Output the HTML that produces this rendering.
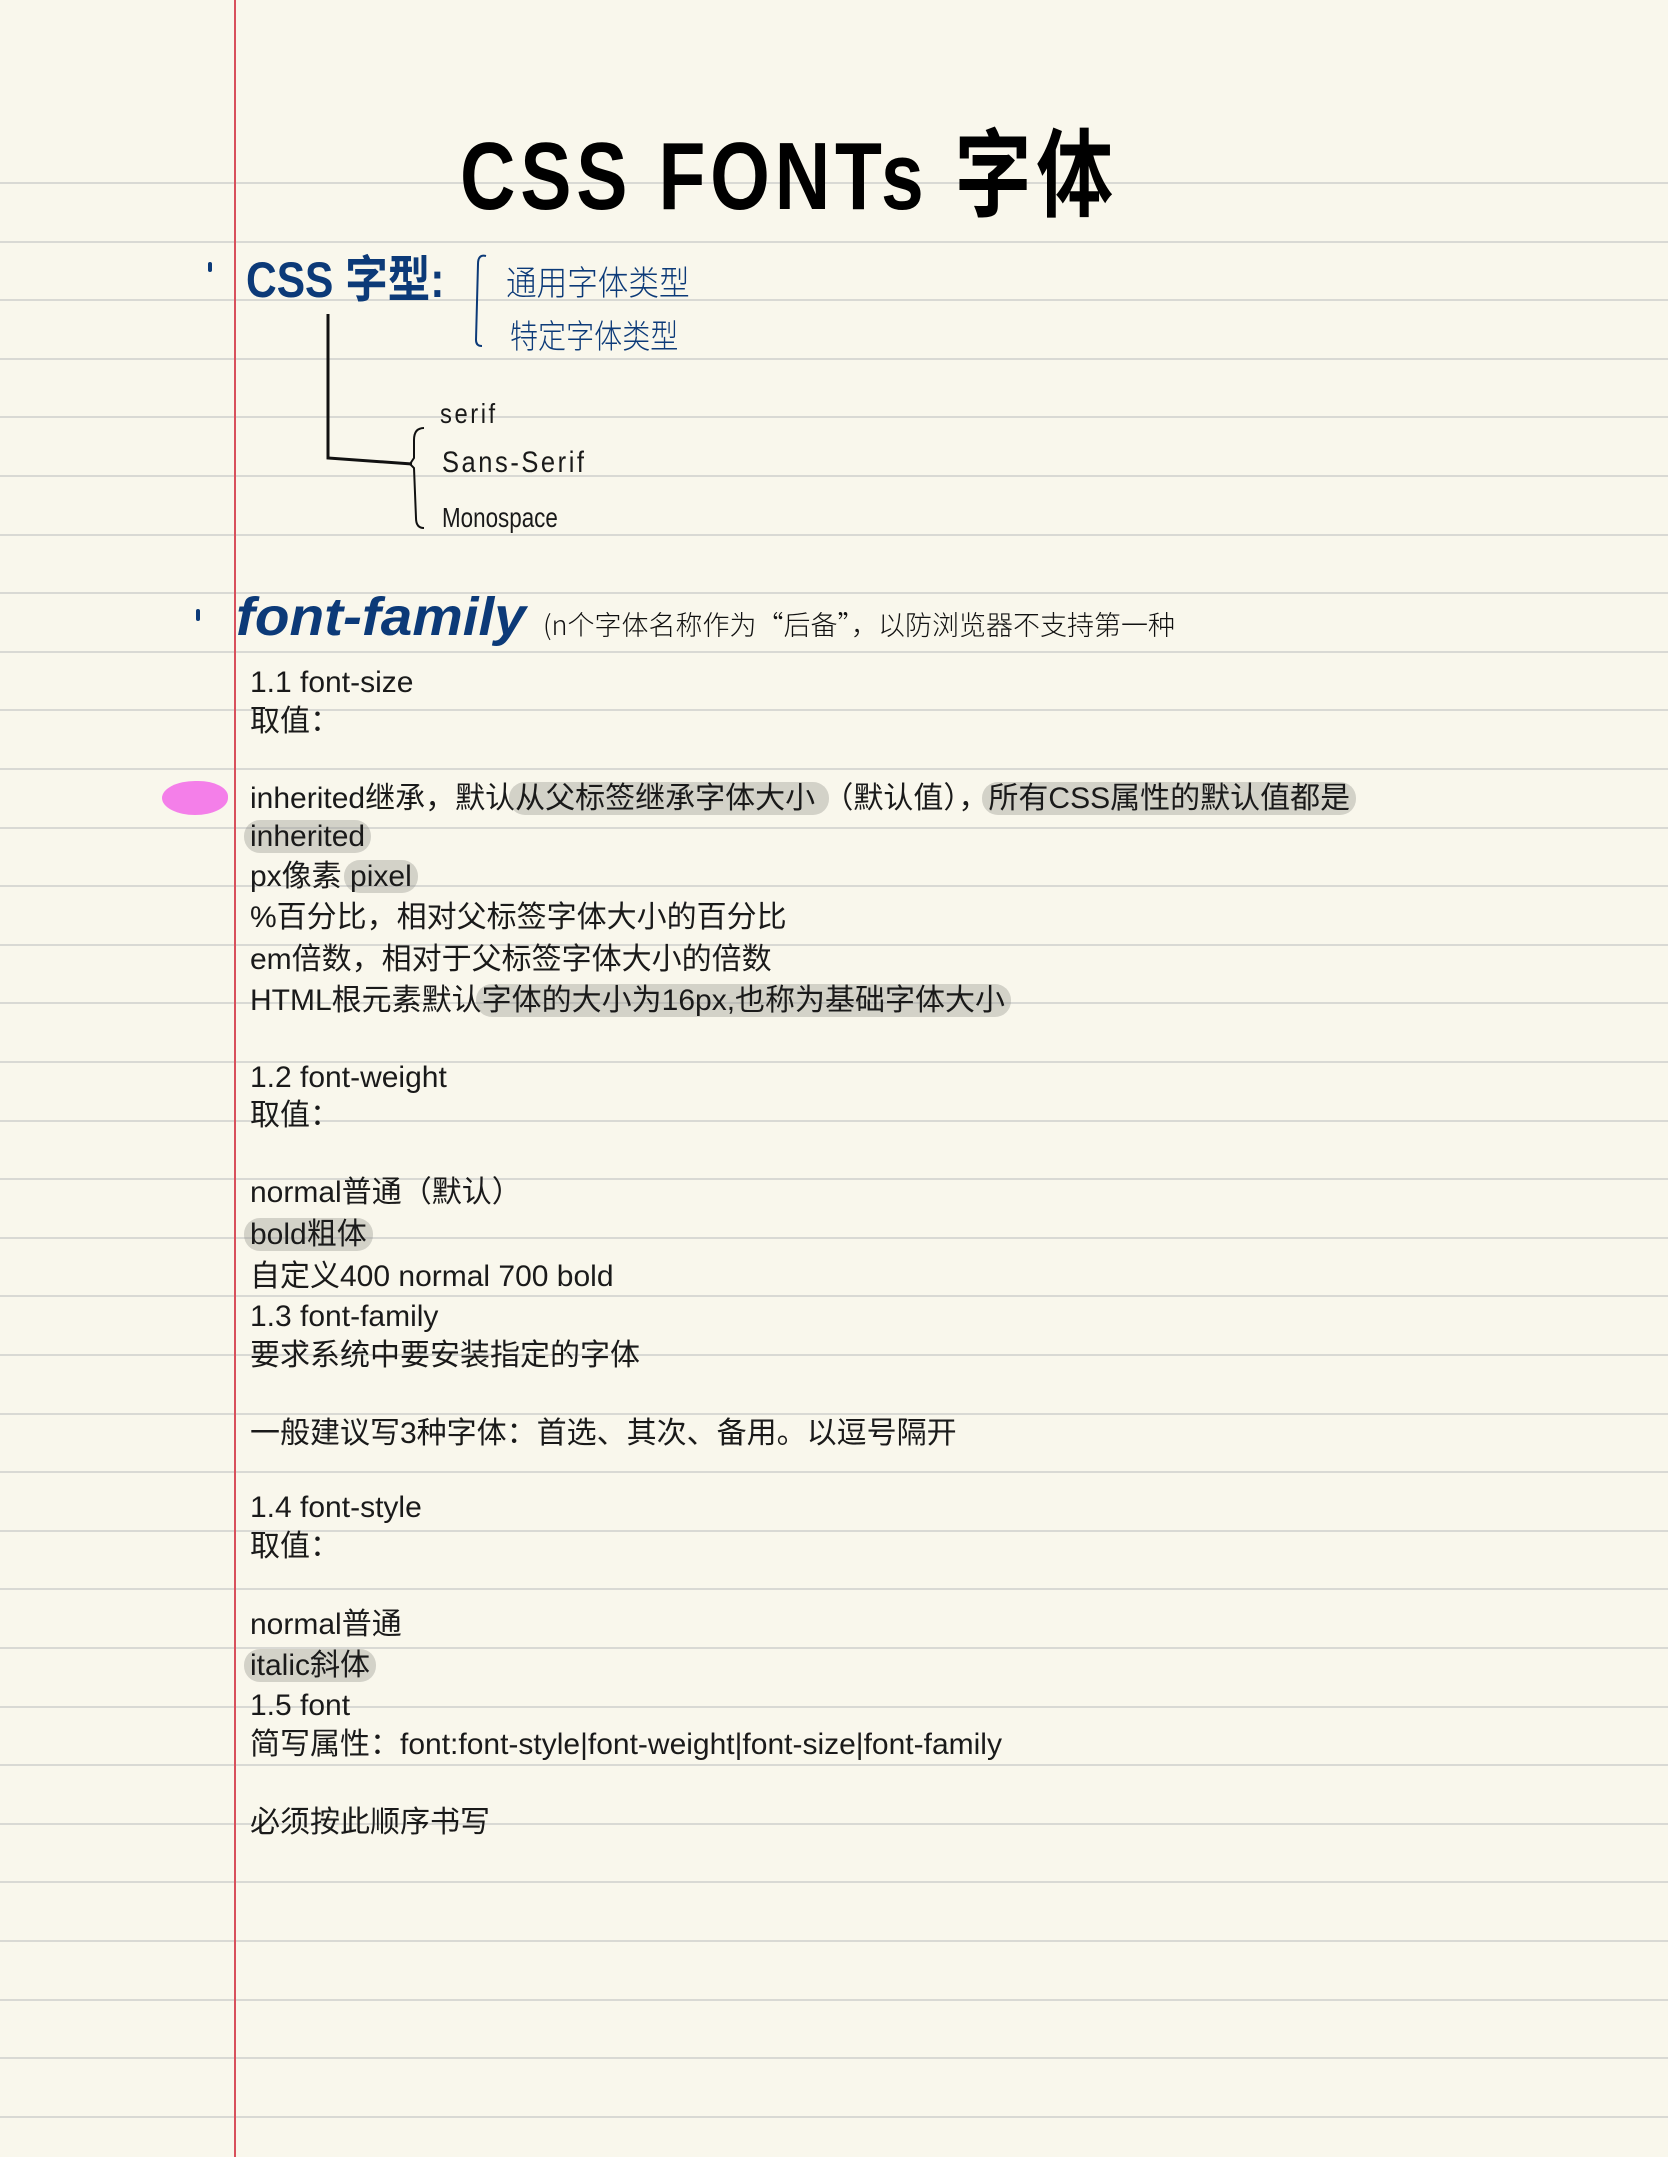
<!DOCTYPE html>
<html><head><meta charset="utf-8">
<style>
html,body{margin:0;padding:0}
body{width:1668px;height:2157px;position:relative;overflow:hidden;background:#f9f7ec;font-family:"Liberation Sans","Noto Sans CJK SC",sans-serif;color:#1a1a1a}
.rule{position:absolute;left:0;width:1668px;height:2px;background:#d9d9d4}
.red{position:absolute;left:234px;top:0;width:2px;height:2157px;background:#d8505c}
.t{position:absolute;left:250px;height:40px;line-height:40px;font-size:30px;white-space:nowrap}
.h{background:rgba(140,140,135,0.35);border-radius:16px;padding:0 6px;margin:0 -6px}
.hw{position:absolute;white-space:nowrap}
</style></head><body>
<div id="rules"></div>
<script>
var r=document.getElementById('rules'),s='';
for(var k=0;k<34;k++){s+='<div class="rule" style="top:'+Math.round(182+58.6*k)+'px"></div>';}
r.innerHTML=s;
</script>
<div class="red"></div>

<!-- title -->
<div class="hw" style="left:460px;top:98px;font-size:96px;font-weight:bold;letter-spacing:6px;transform:scaleX(0.8);transform-origin:left top;color:#000">CSS FONTs 字体</div>

<!-- CSS 字型 -->
<div style="position:absolute;left:208px;top:262px;width:4px;height:10px;background:#0c3a78;border-radius:2px"></div>
<div class="hw" style="left:246px;top:240px;font-size:50px;font-weight:bold;color:#0c3a78;transform:scaleX(0.85);transform-origin:left top">CSS 字型:</div>
<svg style="position:absolute;left:470px;top:250px" width="30" height="100"><path d="M16 6 Q8 4 8 14 L6 90 Q6 96 12 96" stroke="#0c3a78" stroke-width="2" fill="none"/></svg>
<div class="hw" style="left:506px;top:256px;font-size:34px;color:#0c3a78;font-family:'Noto Sans CJK SC',sans-serif;font-weight:300;transform:scaleX(0.9);transform-origin:left top">通用字体类型</div>
<div class="hw" style="left:510px;top:310px;font-size:33px;color:#0c3a78;font-family:'Noto Sans CJK SC',sans-serif;font-weight:300;transform:scaleX(0.85);transform-origin:left top">特定字体类型</div>

<!-- tree -->
<svg style="position:absolute;left:0;top:0" width="700" height="560">
<path d="M328 314 L328 458 L412 464" stroke="#111" stroke-width="3" fill="none"/>
<path d="M424 428 Q414 428 414 440 L414 458 L410 464 L414 468 L416 518 Q416 528 424 528" stroke="#111" stroke-width="2" fill="none"/>
</svg>
<div class="hw" style="left:440px;top:398px;font-size:28px;transform:scaleX(0.85);transform-origin:left top;letter-spacing:3px">serif</div>
<div class="hw" style="left:442px;top:446px;font-size:30px;transform:scaleX(0.85);transform-origin:left top;letter-spacing:3px">Sans-Serif</div>
<div class="hw" style="left:442px;top:502px;font-size:28px;transform:scaleX(0.8);transform-origin:left top">Monospace</div>

<!-- font-family -->
<div style="position:absolute;left:196px;top:609px;width:4px;height:12px;background:#0c3a78;border-radius:2px"></div>
<div class="hw" style="left:236px;top:586px;font-size:54px;font-weight:bold;font-style:italic;color:#0c3a78;transform:scaleX(1.05);transform-origin:left top">font-family</div>
<div class="hw" style="left:543px;top:604px;font-size:27px;color:#111;font-family:'Noto Sans CJK SC',sans-serif;font-weight:300;transform:scaleX(1.0);transform-origin:left top">(n个字体名称作为“后备”，以防浏览器不支持第一种</div>

<!-- pink -->
<div style="position:absolute;left:162px;top:781px;width:66px;height:34px;background:#f47fe9;border-radius:50% 45% 50% 50%"></div>

<div class="t" style="top:663px">1.1 font-size</div>
<div class="t" style="top:702px">取值：</div>
<div class="t" style="top:779px">inherited继承，默认<span class="h">从父标签继承字体大小 </span>（默认值），<span class="h">所有CSS属性的默认值都是</span></div>
<div class="t" style="top:817px"><span class="h">inherited</span></div>
<div class="t" style="top:857px">px像素 <span class="h">pixel</span></div>
<div class="t" style="top:898px">%百分比，相对父标签字体大小的百分比</div>
<div class="t" style="top:940px">em倍数，相对于父标签字体大小的倍数</div>
<div class="t" style="top:981px">HTML根元素默认<span class="h">字体的大小为16px,也称为基础字体大小</span></div>
<div class="t" style="top:1058px">1.2 font-weight</div>
<div class="t" style="top:1096px">取值：</div>
<div class="t" style="top:1173px">normal普通（默认）</div>
<div class="t" style="top:1215px"><span class="h">bold粗体</span></div>
<div class="t" style="top:1257px">自定义400 normal 700 bold</div>
<div class="t" style="top:1297px">1.3 font-family</div>
<div class="t" style="top:1336px">要求系统中要安装指定的字体</div>
<div class="t" style="top:1414px">一般建议写3种字体：首选、其次、备用。以逗号隔开</div>
<div class="t" style="top:1488px">1.4 font-style</div>
<div class="t" style="top:1527px">取值：</div>
<div class="t" style="top:1605px">normal普通</div>
<div class="t" style="top:1646px"><span class="h">italic斜体</span></div>
<div class="t" style="top:1686px">1.5 font</div>
<div class="t" style="top:1725px">简写属性：font:font-style|font-weight|font-size|font-family</div>
<div class="t" style="top:1803px">必须按此顺序书写</div>
</body></html>
